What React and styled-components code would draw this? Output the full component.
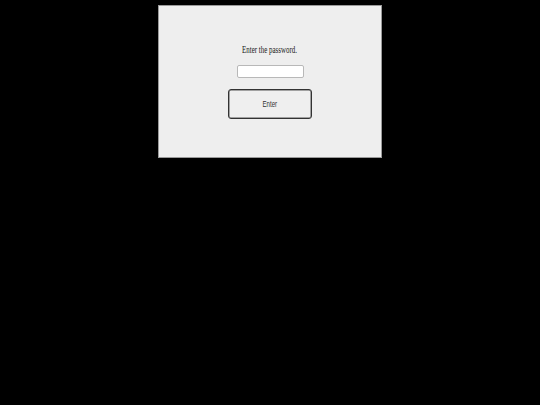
import React from "react";
import styled, { createGlobalStyle } from "styled-components";

const Global = createGlobalStyle`
  html, body {
    margin: 0;
    padding: 0;
    background: #000;
  }
  body {
    width: 540px;
    height: 405px;
    overflow: hidden;
  }
`;

const Screen = styled.div`
  padding: 5px 0 0 158px;
`;

const Panel = styled.form`
  box-sizing: border-box;
  width: 224px;
  height: 153px;
  background: #eeeeee;
  border: 1px solid #9a9a9a;
  display: flex;
  flex-direction: column;
  align-items: center;
  padding-top: 36px;
  margin: 0;
`;

const Prompt = styled.p`
  margin: 0;
  height: 14px;
  line-height: 14px;
  font-family: "Liberation Serif", "Times New Roman", serif;
  font-size: 11px;
  color: #222;
  white-space: nowrap;
  transform: scaleX(0.63);
`;

const Field = styled.input`
  box-sizing: border-box;
  margin-top: 9px;
  width: 67px;
  height: 13px;
  padding: 0;
  background: #fff;
  border: 1px solid #b8b8b8;
  border-radius: 2px;
  outline: none;
`;

const Submit = styled.button`
  box-sizing: border-box;
  margin-top: 11px;
  width: 84px;
  height: 30px;
  padding: 0;
  background: #efefef;
  border: 1px solid #333;
  border-radius: 3px;
  box-shadow: inset 0 0 0 0.5px #555;
  cursor: pointer;
  display: flex;
  align-items: center;
  justify-content: center;
`;

const SubmitLabel = styled.span`
  font-family: "Liberation Sans", Arial, sans-serif;
  font-size: 9px;
  color: #333;
  transform: scaleX(0.68);
`;

export default function App() {
  return (
    <Screen>
      <Global />
      <Panel onSubmit={(e) => e.preventDefault()}>
        <Prompt>Enter the password.</Prompt>
        <Field type="password" />
        <Submit type="submit">
          <SubmitLabel>Enter</SubmitLabel>
        </Submit>
      </Panel>
    </Screen>
  );
}
